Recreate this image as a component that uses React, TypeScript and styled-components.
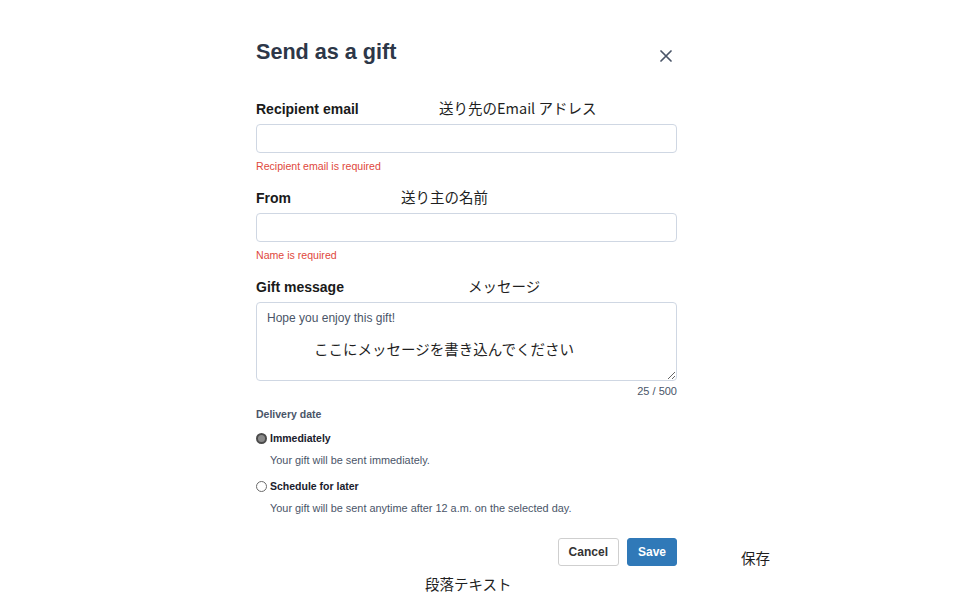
import React from "react";
import styled, { createGlobalStyle } from "styled-components";

const Global = createGlobalStyle`
  html, body { margin: 0; padding: 0; background: #ffffff; }
  body { font-family: "Liberation Sans", Arial, sans-serif; }
  * { box-sizing: border-box; }
`;

const Page = styled.div`
  width: 970px;
  height: 600px;
  padding: 38px 0 0 256px;
  overflow: hidden;
`;

const Form = styled.div`
  width: 421px;
  display: flex;
  flex-direction: column;
`;

const Header = styled.div`
  display: flex;
  justify-content: space-between;
  align-items: flex-start;
  height: 28px;
  margin-bottom: 34px;
`;

const Title = styled.h2`
  margin: 0;
  font-size: 21.6px;
  line-height: 28px;
  font-weight: 700;
  color: #2d3748;
`;

const CloseButton = styled.button`
  border: none;
  background: none;
  padding: 0;
  margin: 12px 5px 0 0;
  width: 12px;
  height: 12px;
  display: flex;
  cursor: pointer;
`;

const Field = styled.div`
  display: flex;
  flex-direction: column;
  margin-bottom: ${(p: { $mb: number }) => p.$mb}px;
`;

const LabelRow = styled.div<{ $indent: number }>`
  display: grid;
  grid-template-columns: ${(p) => p.$indent}px auto;
  align-items: center;
  height: 18px;
  margin-bottom: 6px;
`;

const Label = styled.label`
  font-size: 14px;
  line-height: 18px;
  font-weight: 700;
  color: #1a1a1a;
  white-space: nowrap;
`;

const Note = styled.span`
  font-family: "Noto Sans CJK JP", "Noto Sans", sans-serif;
  font-size: 14.5px;
  line-height: 20px;
  color: #1f1f1f;
  white-space: nowrap;
`;

const LabelNote = styled(Note)`
  margin-top: -2px;
`;

const Input = styled.input`
  width: 100%;
  height: 29px;
  border: 1px solid #cfd7e3;
  border-radius: 4px;
  padding: 0 10px;
  font-size: 12px;
  outline: none;
`;

const ErrorText = styled.div`
  margin-top: 6px;
  font-size: 10.6px;
  line-height: 14px;
  color: #e0483c;
`;

const TextAreaWrap = styled.div`
  position: relative;
  height: 79px;
`;

const TextArea = styled.textarea`
  width: 100%;
  height: 79px;
  border: 1px solid #cfd7e3;
  border-radius: 4px;
  padding: 8px 10px;
  font-family: "Liberation Sans", Arial, sans-serif;
  font-size: 12px;
  line-height: 14px;
  color: #4a5568;
  resize: vertical;
  outline: none;
  display: block;
`;

const OverlayNote = styled(Note)`
  position: absolute;
  left: 58px;
  top: 37px;
  pointer-events: none;
`;

const Counter = styled.div`
  margin-top: 3px;
  text-align: right;
  font-size: 11px;
  line-height: 14px;
  color: #4a5568;
`;

const Fieldset = styled.fieldset`
  border: none;
  margin: 0;
  padding: 0;
  display: flex;
  flex-direction: column;
`;

const Legend = styled.div`
  font-size: 10.5px;
  line-height: 14px;
  font-weight: 700;
  color: #4a5568;
  margin-bottom: 10px;
`;

const RadioRow = styled.label`
  display: flex;
  align-items: center;
  gap: 3px;
  height: 14px;
  font-size: 10.5px;
  font-weight: 700;
  color: #1a202c;
`;

const Radio = styled.input`
  appearance: none;
  margin: 0;
  width: 11px;
  height: 11px;
  border-radius: 50%;
  border: 1px solid #6b6b6b;
  background: #ffffff;
  &:checked {
    border: 2px solid #4b4b4b;
    background: #8a8a8a;
  }
`;

const Help = styled.div`
  margin: 8px 0 ${(p: { $mb: number }) => p.$mb}px 14px;
  font-size: 10.9px;
  line-height: 14px;
  color: #4a5568;
`;

const FooterRow = styled.div`
  display: flex;
  align-items: flex-start;
  width: 714px;
`;

const ButtonGroup = styled.div`
  width: 421px;
  flex-shrink: 0;
  display: flex;
  justify-content: flex-end;
  gap: 8px;
`;

const Button = styled.button<{ $primary?: boolean }>`
  height: 28px;
  padding: 0 10px;
  border-radius: 3px;
  font-family: "Liberation Sans", Arial, sans-serif;
  font-size: 12px;
  font-weight: 700;
  cursor: pointer;
  border: 1px solid ${(p) => (p.$primary ? "#3079b8" : "#cfcfcf")};
  background: ${(p) => (p.$primary ? "#3079b8" : "#ffffff")};
  color: ${(p) => (p.$primary ? "#ffffff" : "#333333")};
`;

const SideNote = styled(Note)`
  margin: 10px 0 0 64px;
`;

const Caption = styled(Note)`
  display: block;
  margin: 6px 0 0 169px;
`;

export default function App() {
  return (
    <>
      <Global />
      <Page>
        <Form>
          <Header>
            <Title>Send as a gift</Title>
            <CloseButton aria-label="Close">
              <svg width="12" height="12" viewBox="0 0 12 12">
                <path d="M1 1 L11 11 M11 1 L1 11" stroke="#4a5568" strokeWidth="1.7" strokeLinecap="round" />
              </svg>
            </CloseButton>
          </Header>

          <Field $mb={16}>
            <LabelRow $indent={183}>
              <Label>Recipient email</Label>
              <LabelNote>送り先のEmail アドレス</LabelNote>
            </LabelRow>
            <Input type="email" />
            <ErrorText>Recipient email is required</ErrorText>
          </Field>

          <Field $mb={16}>
            <LabelRow $indent={145}>
              <Label>From</Label>
              <LabelNote>送り主の名前</LabelNote>
            </LabelRow>
            <Input type="text" />
            <ErrorText>Name is required</ErrorText>
          </Field>

          <Field $mb={9}>
            <LabelRow $indent={212}>
              <Label>Gift message</Label>
              <LabelNote>メッセージ</LabelNote>
            </LabelRow>
            <TextAreaWrap>
              <TextArea defaultValue="Hope you enjoy this gift!" />
              <OverlayNote>ここにメッセージを書き込んでください</OverlayNote>
            </TextAreaWrap>
            <Counter>25 / 500</Counter>
          </Field>

          <Fieldset>
            <Legend>Delivery date</Legend>
            <RadioRow>
              <Radio type="radio" name="delivery" defaultChecked />
              Immediately
            </RadioRow>
            <Help $mb={12}>Your gift will be sent immediately.</Help>
            <RadioRow>
              <Radio type="radio" name="delivery" />
              Schedule for later
            </RadioRow>
            <Help $mb={23}>Your gift will be sent anytime after 12 a.m. on the selected day.</Help>
          </Fieldset>
        </Form>

        <FooterRow>
          <ButtonGroup>
            <Button>Cancel</Button>
            <Button $primary>Save</Button>
          </ButtonGroup>
          <SideNote>保存</SideNote>
        </FooterRow>
        <Caption>段落テキスト</Caption>
      </Page>
    </>
  );
}
